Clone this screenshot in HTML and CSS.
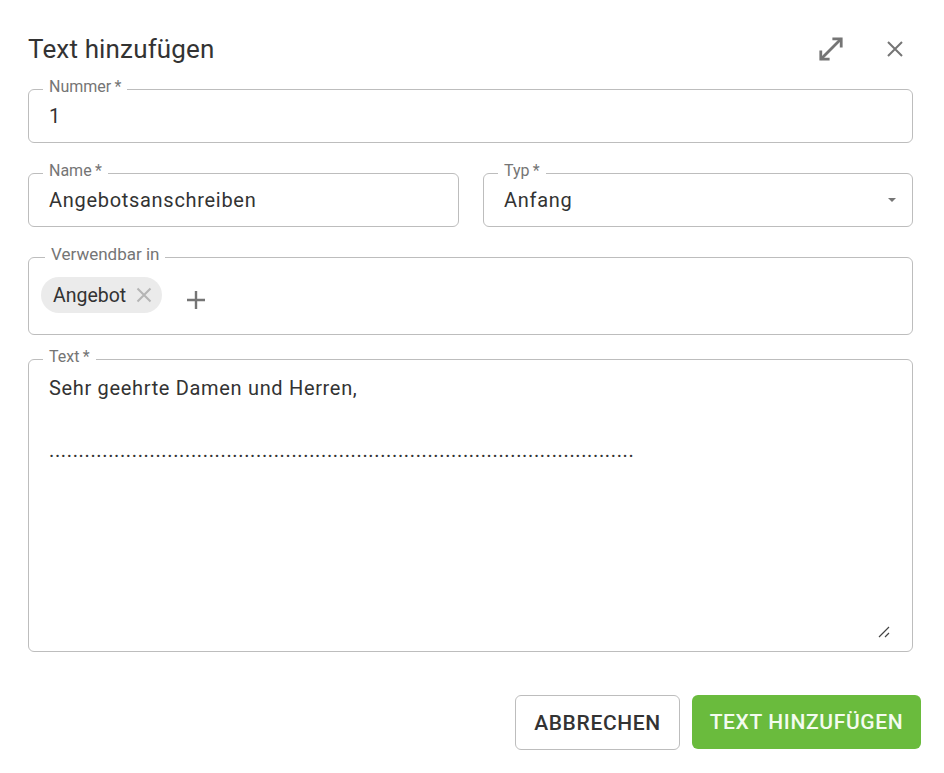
FILE: index.html
```html
<!DOCTYPE html>
<html lang="de">
  <head>
    <meta charset="UTF-8" />
    <title>Text hinzufügen</title>
    <link rel="stylesheet" href="styles.css">
  </head>
  <body>
    <main class="dialog">
      <header class="dialog-header">
        <h2 class="dialog-title">Text hinzufügen</h2>
        <div class="dialog-actions">
          <svg class="icon-expand" width="26" height="26" viewBox="0 0 28 28" fill="none" stroke="#757575" stroke-width="3">
            <path d="M3 25 L25 3"/>
            <path d="M15.5 3 H25 V12.5"/>
            <path d="M3 15.5 V25 H12.5"/>
          </svg>
          <svg class="icon-close" width="18" height="18" viewBox="0 0 18 18" fill="none" stroke="#757575" stroke-width="2">
            <path d="M2 2 L16 16 M16 2 L2 16"/>
          </svg>
        </div>
      </header>

      <form class="form">
        <div class="field field-number">
          <label class="field-label">Nummer&thinsp;*</label>
          <div class="field-value">1</div>
        </div>

        <div class="form-row">
          <div class="field field-name">
            <label class="field-label">Name&thinsp;*</label>
            <div class="field-value">Angebotsanschreiben</div>
          </div>
          <div class="field field-type">
            <label class="field-label">Typ&thinsp;*</label>
            <div class="field-value">Anfang</div>
            <span class="select-arrow"></span>
          </div>
        </div>

        <div class="field field-usage">
          <label class="field-label usage-label">Verwendbar in</label>
          <div class="chip">
            <span>Angebot</span>
            <svg width="18" height="18" viewBox="0 0 18 18" fill="none" stroke="#b5b5b5" stroke-width="2">
              <path d="M2.5 2.5 L15.5 15.5 M15.5 2.5 L2.5 15.5"/>
            </svg>
          </div>
          <svg class="icon-add" width="20" height="20" viewBox="0 0 20 20" fill="none" stroke="#757575" stroke-width="2.4">
            <path d="M10 1 V19 M1 10 H19"/>
          </svg>
        </div>

        <div class="field field-text">
          <label class="field-label">Text&thinsp;*</label>
          <div class="text-line">Sehr geehrte Damen und Herren,</div>
          <div class="text-line text-blank"></div>
          <div class="text-line text-dots">...................................................................................................</div>
          <svg class="resize-handle" width="12" height="12" viewBox="0 0 12 12" fill="none" stroke="#444" stroke-width="1.2">
            <path d="M1 11 L11 1 M7 11 L11 7"/>
          </svg>
        </div>
      </form>

      <footer class="dialog-footer">
        <button class="btn btn-cancel" type="button">Abbrechen</button>
        <button class="btn btn-submit" type="button">Text hinzufügen</button>
      </footer>
    </main>
  </body>
</html>
```

FILE: styles.css
```css
* {
  box-sizing: border-box;
  margin: 0;
  padding: 0;
}
body {
  background: #fff;
  color: #333;
  font-family: Roboto, "Liberation Sans", sans-serif;
}
.dialog {
  width: 944px;
  height: 773px;
  padding: 0 23px 0 28px;
}
.dialog-header {
  display: flex;
  justify-content: space-between;
  align-items: center;
  height: 89px;
  padding: 9px 16px 0 0;
}
.dialog-title {
  font-size: 26px;
  font-weight: 400;
  letter-spacing: 0.15px;
}
.dialog-actions {
  display: flex;
  align-items: center;
  gap: 42px;
  margin-right: 1px;
}
.form {
  display: flex;
  flex-direction: column;
  width: 885px;
}
.form-row {
  display: flex;
  gap: 24px;
  margin-top: 30px;
}
.field {
  position: relative;
  border: 1px solid #bdbdbd;
  border-radius: 6px;
  padding: 0 20px;
}
.field-label {
  position: absolute;
  top: -13px;
  left: 14px;
  padding: 0 6px;
  background: #fff;
  color: #757575;
  font-size: 16px;
  line-height: 20px;
}
.field-value {
  font-size: 20px;
  letter-spacing: 0.7px;
  line-height: 52px;
}
.field-number {
  height: 54px;
}
.field-name {
  flex: 0 0 431px;
  height: 54px;
}
.field-type {
  flex: 1;
  height: 54px;
}
.select-arrow {
  position: absolute;
  top: 24px;
  right: 16px;
  border-left: 4.5px solid transparent;
  border-right: 4.5px solid transparent;
  border-top: 4.5px solid #757575;
}
.field-usage {
  display: flex;
  align-items: flex-start;
  gap: 24px;
  height: 78px;
  margin-top: 30px;
  padding: 19px 12px 0;
}
.usage-label {
  top: -14px;
  left: 16px;
  font-size: 17px;
}
.chip {
  display: flex;
  align-items: center;
  gap: 9px;
  height: 36px;
  padding: 0 9px 0 12px;
  border-radius: 18px;
  background: #ebebeb;
  font-size: 19.5px;
}
.icon-add {
  margin-top: 13px;
}
.field-text {
  height: 293px;
  margin-top: 24px;
  padding-top: 13px;
}
.text-line {
  font-size: 20px;
  letter-spacing: 0.67px;
  line-height: 31px;
}
.text-blank {
  height: 31px;
}
.text-dots {
  letter-spacing: 0.64px;
}
.resize-handle {
  position: absolute;
  right: 22px;
  bottom: 13px;
}
.dialog-footer {
  display: flex;
  justify-content: flex-end;
  align-items: flex-start;
  gap: 12px;
  margin-top: 43px;
}
.btn {
  height: 55px;
  border-radius: 6px;
  font-family: inherit;
  font-size: 21px;
  font-weight: 500;
  letter-spacing: 0.65px;
  text-transform: uppercase;
}
.btn-cancel {
  width: 165px;
  background: #fff;
  border: 1px solid #bdbdbd;
  color: #333;
}
.btn-submit {
  width: 229px;
  height: 54px;
  background: #6abb3d;
  border: none;
  color: #f4fbef;
}
```
